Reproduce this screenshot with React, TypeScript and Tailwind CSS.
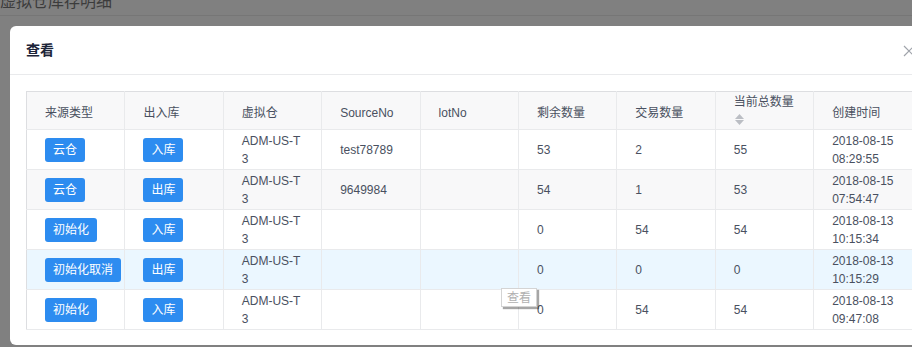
import React from "react";

type Row = {
  source: string;
  io: string;
  wh: string;
  sourceNo: string;
  lotNo: string;
  remain: string;
  trade: string;
  total: string;
  date: string;
  time: string;
};

const rows: Row[] = [
  { source: "云仓", io: "入库", wh: "ADM-US-T3", sourceNo: "test78789", lotNo: "", remain: "53", trade: "2", total: "55", date: "2018-08-15", time: "08:29:55" },
  { source: "云仓", io: "出库", wh: "ADM-US-T3", sourceNo: "9649984", lotNo: "", remain: "54", trade: "1", total: "53", date: "2018-08-15", time: "07:54:47" },
  { source: "初始化", io: "入库", wh: "ADM-US-T3", sourceNo: "", lotNo: "", remain: "0", trade: "54", total: "54", date: "2018-08-13", time: "10:15:34" },
  { source: "初始化取消", io: "出库", wh: "ADM-US-T3", sourceNo: "", lotNo: "", remain: "0", trade: "0", total: "0", date: "2018-08-13", time: "10:15:29" },
  { source: "初始化", io: "入库", wh: "ADM-US-T3", sourceNo: "", lotNo: "", remain: "0", trade: "54", total: "54", date: "2018-08-13", time: "09:47:08" },
];

const headers = ["来源类型", "出入库", "虚拟仓", "SourceNo", "lotNo", "剩余数量", "交易数量", "当前总数量", "创建时间", ""];

function Tag({ children }: { children: React.ReactNode }) {
  return (
    <span className="inline-flex h-6 items-center whitespace-nowrap rounded-[3px] bg-[#2d8cf0] px-2 text-xs text-white">
      {children}
    </span>
  );
}

function SortIcon() {
  return (
    <span className="mt-[3px] flex flex-col items-start gap-[1px] pl-[1px]">
      <svg width="9" height="5" viewBox="0 0 9 5">
        <path d="M4.5 0 L9 5 L0 5 Z" fill="#bbbec4" />
      </svg>
      <svg width="9" height="5" viewBox="0 0 9 5">
        <path d="M0 0 L9 0 L4.5 5 Z" fill="#bbbec4" />
      </svg>
    </span>
  );
}

export default function App() {
  const cell = "border-r border-b border-[#e9eaec] px-[18px] py-0 align-middle text-left";

  return (
    <div
      className="relative h-[347px] w-[912px] overflow-hidden bg-[#808080]"
      style={{ fontFamily: '"Liberation Sans", "Noto Sans CJK SC", sans-serif' }}
    >
      {/* page behind the mask */}
      <div className="h-[26px] border-b border-[#767676]">
        <div className="-mt-[10px] text-base text-[#3c3c3c]">虚拟仓库存明细</div>
      </div>

      <div className="absolute left-[10px] top-[26px] h-[319px] w-[1000px] overflow-hidden rounded-[6px] bg-white">
        <div className="flex h-[49px] w-[902px] items-center justify-between border-b border-[#e9eaec] pl-4">
          <span className="text-sm font-bold text-[#1c2438]">查看</span>
          <svg width="12" height="12" viewBox="0 0 12 12" className="-mr-[3px] mt-[2px]">
            <path d="M1 1 L11 11 M11 1 L1 11" stroke="#a0a4ab" strokeWidth="1.2" />
          </svg>
        </div>

        <div className="pl-4 pt-4">
          <table className="w-[984px] table-fixed border-collapse border-l border-t border-[#dddee1] text-xs leading-[18px] text-[#495060]">
            <colgroup>
              {headers.map((_, i) => (
                <col key={i} className="w-[98.4px]" />
              ))}
            </colgroup>
            <thead>
              <tr className="h-[38px] bg-[#f8f8f9]">
                {headers.map((h, i) => (
                  <th key={i} className={`${cell} whitespace-nowrap font-normal`}>
                    {h === "当前总数量" ? (
                      <div className="-mt-[4px] flex flex-col">
                        <span>{h}</span>
                        <SortIcon />
                      </div>
                    ) : (
                      <span className="relative top-[2px]">{h}</span>
                    )}
                  </th>
                ))}
              </tr>
            </thead>
            <tbody>
              {rows.map((r, i) => (
                <tr
                  key={i}
                  className={`h-10 ${i === 3 ? "bg-[#ebf7ff]" : i === 1 ? "bg-[#f8f8f9]" : "bg-white"}`}
                >
                  <td className={cell}>
                    <Tag>{r.source}</Tag>
                  </td>
                  <td className={cell}>
                    <Tag>{r.io}</Tag>
                  </td>
                  <td className={cell}>
                    {r.wh.slice(0, -1)}
                    <br />
                    {r.wh.slice(-1)}
                  </td>
                  <td className={cell}>{r.sourceNo}</td>
                  <td className={cell}>{r.lotNo}</td>
                  <td className={cell}>{r.remain}</td>
                  <td className={cell}>{r.trade}</td>
                  <td className={cell}>{r.total}</td>
                  <td className={`${cell} whitespace-nowrap`}>
                    {r.date}
                    <br />
                    {r.time}
                  </td>
                  <td className={cell}></td>
                </tr>
              ))}
            </tbody>
          </table>
        </div>
      </div>

      {/* native title tooltip */}
      <div className="absolute left-[501px] top-[288px] flex h-[19px] w-[36px] items-center justify-center border border-[#d4d4d4] bg-white text-xs text-[#b0b0b0] shadow-[2px_2px_1px_rgba(0,0,0,0.35)]">
        查看
      </div>
    </div>
  );
}
